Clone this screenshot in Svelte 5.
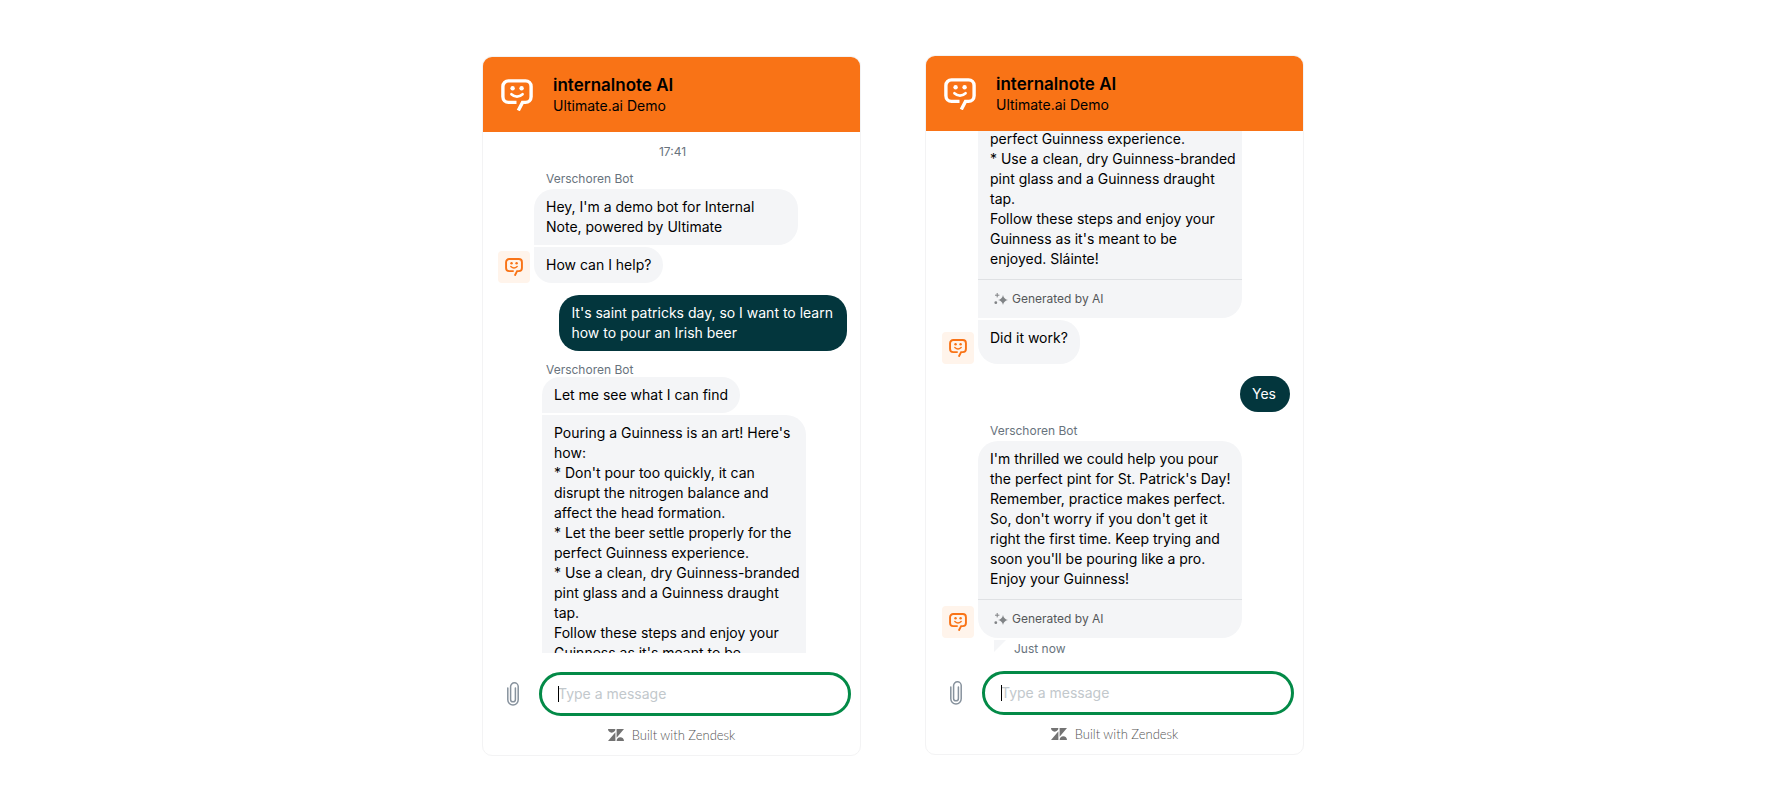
<script lang="ts">
	type Bubble = { text: string; ai?: boolean; wide?: boolean; roomy?: boolean };
	type Entry =
		| { kind: 'time'; text: string }
		| { kind: 'user'; text: string }
		| { kind: 'bot'; name?: string; avatar: boolean; indent?: boolean; bubbles: Bubble[] };

	const botName = 'Verschoren Bot';

	const recipe = `Pouring a Guinness is an art! Here's
how:
* Don't pour too quickly, it can
disrupt the nitrogen balance and
affect the head formation.
* Let the beer settle properly for the
perfect Guinness experience.
* Use a clean, dry Guinness-branded
pint glass and a Guinness draught
tap.
Follow these steps and enjoy your
Guinness as it's meant to be
enjoyed. Sláinte!`;

	const thanks = `I'm thrilled we could help you pour
the perfect pint for St. Patrick's Day!
Remember, practice makes perfect.
So, don't worry if you don't get it
right the first time. Keep trying and
soon you'll be pouring like a pro.
Enjoy your Guinness!`;

	const chats: { id: string; latest: boolean; status?: string; entries: Entry[] }[] = [
		{
			id: 'start',
			latest: false,
			entries: [
				{ kind: 'time', text: '17:41' },
				{
					kind: 'bot',
					name: botName,
					avatar: true,
					bubbles: [
						{ text: "Hey, I'm a demo bot for Internal\nNote, powered by Ultimate", wide: true },
						{ text: 'How can I help?' }
					]
				},
				{ kind: 'user', text: "It's saint patricks day, so I want to learn\nhow to pour an Irish beer" },
				{
					kind: 'bot',
					name: botName,
					avatar: false,
					indent: true,
					bubbles: [{ text: 'Let me see what I can find' }, { text: recipe, ai: true, wide: true }]
				}
			]
		},
		{
			id: 'end',
			latest: true,
			status: 'Just now',
			entries: [
				{
					kind: 'bot',
					avatar: true,
					bubbles: [
						{ text: recipe, ai: true, wide: true },
						{ text: 'Did it work?', roomy: true }
					]
				},
				{ kind: 'user', text: 'Yes' },
				{ kind: 'bot', name: botName, avatar: true, bubbles: [{ text: thanks, ai: true, wide: true }] }
			]
		}
	];
</script>

{#snippet botIcon()}
	<svg class="bot-icon" viewBox="0 0 32 32" fill="none" stroke="currentColor" stroke-width="3.4" aria-hidden="true">
		<path d="M15.5 23.4H7.5A5.6 5.6 0 0 1 1.9 17.8V7.5A5.6 5.6 0 0 1 7.5 1.9h17A5.6 5.6 0 0 1 30.1 7.5V17.8a5.6 5.6 0 0 1-5.6 5.6h-3L17.3 31.5" />
		<path d="M10.4 15.2q5.6 5 11.2 0" stroke-width="2.6" stroke-linecap="round" />
		<circle cx="11.6" cy="9.2" r="2.2" fill="currentColor" stroke="none" />
		<circle cx="20.6" cy="9.2" r="2.2" fill="currentColor" stroke="none" />
	</svg>
{/snippet}

<main class="stage">
	{#each chats as chat (chat.id)}
		<section class="widget" class:latest={chat.latest}>
			<header class="widget-header">
				{@render botIcon()}
				<div>
					<h2>internalnote AI</h2>
					<p>Ultimate.ai Demo</p>
				</div>
			</header>

			<div class="messages">
				{#each chat.entries as entry}
					{#if entry.kind === 'time'}
						<time class="timestamp">{entry.text}</time>
					{:else if entry.kind === 'user'}
						<div class="bubble user"><p>{entry.text}</p></div>
					{:else}
						<div class="bot-group" class:indent={entry.indent}>
							<div class="avatar-slot">
								{#if entry.avatar}
									<span class="avatar">{@render botIcon()}</span>
								{/if}
							</div>
							<div class="bot-column">
								{#if entry.name}
									<span class="bot-name">{entry.name}</span>
								{/if}
								<div class="bubbles">
									{#each entry.bubbles as bubble}
										<div class="bubble bot" class:wide={bubble.wide} class:ai={bubble.ai} class:roomy={bubble.roomy}>
											<p>{bubble.text}</p>
											{#if bubble.ai}
												<div class="generated">
													<svg viewBox="0 0 14 12" aria-hidden="true">
														<path d="M9 2Q9.8 6.2 14 7 9.8 7.8 9 12 8.2 7.8 4 7 8.2 6.2 9 2z" />
														<path d="M3.2 0v4.4M1 2.2h4.4" stroke-width="1" />
														<circle cx="1.8" cy="9.7" r="1.4" />
													</svg>
													Generated by AI
												</div>
											{/if}
										</div>
									{/each}
								</div>
							</div>
						</div>
					{/if}
				{/each}
				{#if chat.status}
					<div class="status"><span class="status-mark"></span>{chat.status}</div>
				{/if}
			</div>

			<footer class="widget-footer">
				<div class="composer">
					<button type="button" class="attach" aria-label="Attach a file">
						<svg viewBox="0 0 12 24" fill="none" stroke="currentColor" stroke-width="1.5" stroke-linecap="round" aria-hidden="true">
							<path d="M0.8 6v11.8a5.2 5.2 0 0 0 10.4 0V4.6a3.8 3.8 0 0 0-7.6 0v12.8a2.4 2.4 0 0 0 4.8 0V6" />
						</svg>
					</button>
					<div class="field">
						<input type="text" placeholder="Type a message" aria-label="Type a message" />
					</div>
				</div>
				<a class="brand" href="#zendesk">
					<svg viewBox="0 2.9 24 18.2" preserveAspectRatio="none" aria-hidden="true">
						<path d="M12.914 2.904V16.29L24 2.905H12.914zM0 2.906C0 5.966 2.483 8.45 5.543 8.45s5.542-2.484 5.543-5.544H0zm11.086 4.807L0 21.096h11.086V7.713zm7.37 7.84c-3.063 0-5.542 2.48-5.542 5.543H24c0-3.06-2.48-5.543-5.543-5.543z" />
					</svg>
					Built with Zendesk
				</a>
			</footer>
		</section>
	{/each}
</main>

<style>
	:global(body) {
		margin: 0;
		background: #fff;
	}

	.stage {
		box-sizing: border-box;
		min-height: 100vh;
		display: flex;
		justify-content: center;
		align-items: flex-start;
		gap: 64px;
		padding: 56px 0 35px 1px;
		font-family: Inter, 'Liberation Sans', sans-serif;
		font-size: 14px;
		line-height: 20px;
		color: #000;
	}

	p,
	h2 {
		margin: 0;
	}

	.widget {
		box-sizing: border-box;
		flex: 0 1 379px;
		height: calc(100vh - 91px);
		display: flex;
		flex-direction: column;
		border: 1px solid #f3f3f4;
		border-radius: 10px;
		overflow: hidden;
	}

	.widget.latest {
		margin-top: -1px;
	}

	/* Header */
	.widget-header {
		box-sizing: border-box;
		flex: none;
		height: 75px;
		display: flex;
		align-items: center;
		gap: 20px;
		padding: 0 18px;
		background: #f97316;
	}

	.widget-header .bot-icon {
		width: 32px;
		height: 32px;
		color: #fff;
	}

	.widget-header h2 {
		font-size: 17px;
		font-weight: 600;
		line-height: 22px;
	}

	/* Conversation */
	.messages {
		flex: 1;
		min-height: 0;
		display: flex;
		flex-direction: column;
		gap: 12px;
		padding: 12px 13px 0 15px;
		border-bottom: 6px solid #fff;
		overflow: hidden;
	}

	.latest .messages {
		justify-content: flex-end;
		padding-top: 0;
		padding-left: 16px;
		border-bottom: 0;
	}

	.messages > * {
		flex: none;
	}

	.timestamp {
		align-self: center;
		font-size: 12px;
		line-height: 16px;
		color: #68737d;
	}

	.bot-group {
		display: flex;
		gap: 4px;
	}

	.avatar-slot {
		width: 32px;
		display: flex;
		align-items: flex-end;
	}

	.avatar {
		width: 32px;
		height: 32px;
		display: grid;
		place-items: center;
		border-radius: 4px;
		background: #fff4eb;
		color: #f97316;
	}

	.avatar .bot-icon {
		width: 18px;
		height: 18px;
	}

	.bot-column {
		display: flex;
		flex-direction: column;
		gap: 3px;
	}

	.bot-name {
		padding-left: 12px;
		font-size: 12px;
		line-height: 14px;
		color: #68737d;
	}

	.bubbles {
		display: flex;
		flex-direction: column;
		align-items: flex-start;
		gap: 2px;
	}

	.indent .bot-column {
		gap: 0;
	}

	.indent .bubbles {
		padding-left: 8px;
	}

	.bubble {
		box-sizing: border-box;
		padding: 8px 12px;
		border-radius: 20px;
	}

	.bubble p {
		white-space: pre;
	}

	.bubble.bot {
		background: #f4f5f7;
	}

	.bubble.bot:not(:first-child) {
		border-top-left-radius: 0;
	}

	.bubble.bot:not(:last-child) {
		border-bottom-left-radius: 0;
	}

	.bubble.wide {
		width: 264px;
	}

	.bubble.roomy {
		padding-bottom: 16px;
	}

	.bubble.ai {
		padding: 8px 0 0;
	}

	.bubble.ai p {
		padding: 0 12px 10px;
	}

	.bubble.user {
		align-self: flex-end;
		padding-right: 14px;
		background: #03363d;
		color: #fff;
	}

	.generated {
		display: flex;
		align-items: center;
		gap: 4px;
		height: 38px;
		padding-left: 16px;
		border-top: 1px solid #dfe1e4;
		font-size: 12px;
		line-height: 16px;
		color: #555759;
	}

	.generated svg {
		width: 14px;
		height: 12px;
		fill: #808386;
		stroke: #808386;
		stroke-width: 0;
	}

	.status {
		display: flex;
		gap: 8px;
		margin-top: -10px;
		padding-left: 52px;
		font-size: 12px;
		line-height: 18px;
		color: #68737d;
	}

	.status-mark {
		width: 12px;
		height: 12px;
		background: #f4f5f7;
		clip-path: polygon(0 0, 100% 0, 0 100%);
	}

	/* Footer */
	.widget-footer {
		flex: none;
		padding: 13px 9px 12px 24px;
	}

	.composer {
		display: flex;
		align-items: center;
		gap: 20px;
	}

	.attach {
		width: 12px;
		height: 24px;
		padding: 0;
		border: 0;
		background: none;
		color: #87929d;
	}

	.attach svg {
		display: block;
		width: 12px;
		height: 24px;
	}

	.field {
		position: relative;
		flex: 1;
	}

	/* text cursor in the focused field */
	.field::before {
		content: '';
		position: absolute;
		left: 19px;
		top: 14px;
		width: 1px;
		height: 16px;
		background: #000;
	}

	.field input {
		box-sizing: border-box;
		display: block;
		width: 100%;
		height: 44px;
		padding: 0 16px 1px;
		border: 3px solid #038a47;
		border-radius: 22px;
		outline: none;
		background: #fff;
		font: inherit;
		color: #000;
	}

	.field input::placeholder {
		color: #c2c8cc;
		opacity: 1;
	}

	.brand {
		display: flex;
		justify-content: center;
		align-items: center;
		gap: 8px;
		margin-top: 11px;
		padding-right: 15px;
		font-family: Lato, sans-serif;
		font-size: 13px;
		font-weight: 300;
		line-height: 16px;
		color: #555;
		text-decoration: none;
	}

	.brand svg {
		width: 16px;
		height: 12px;
		fill: #737373;
	}
</style>
